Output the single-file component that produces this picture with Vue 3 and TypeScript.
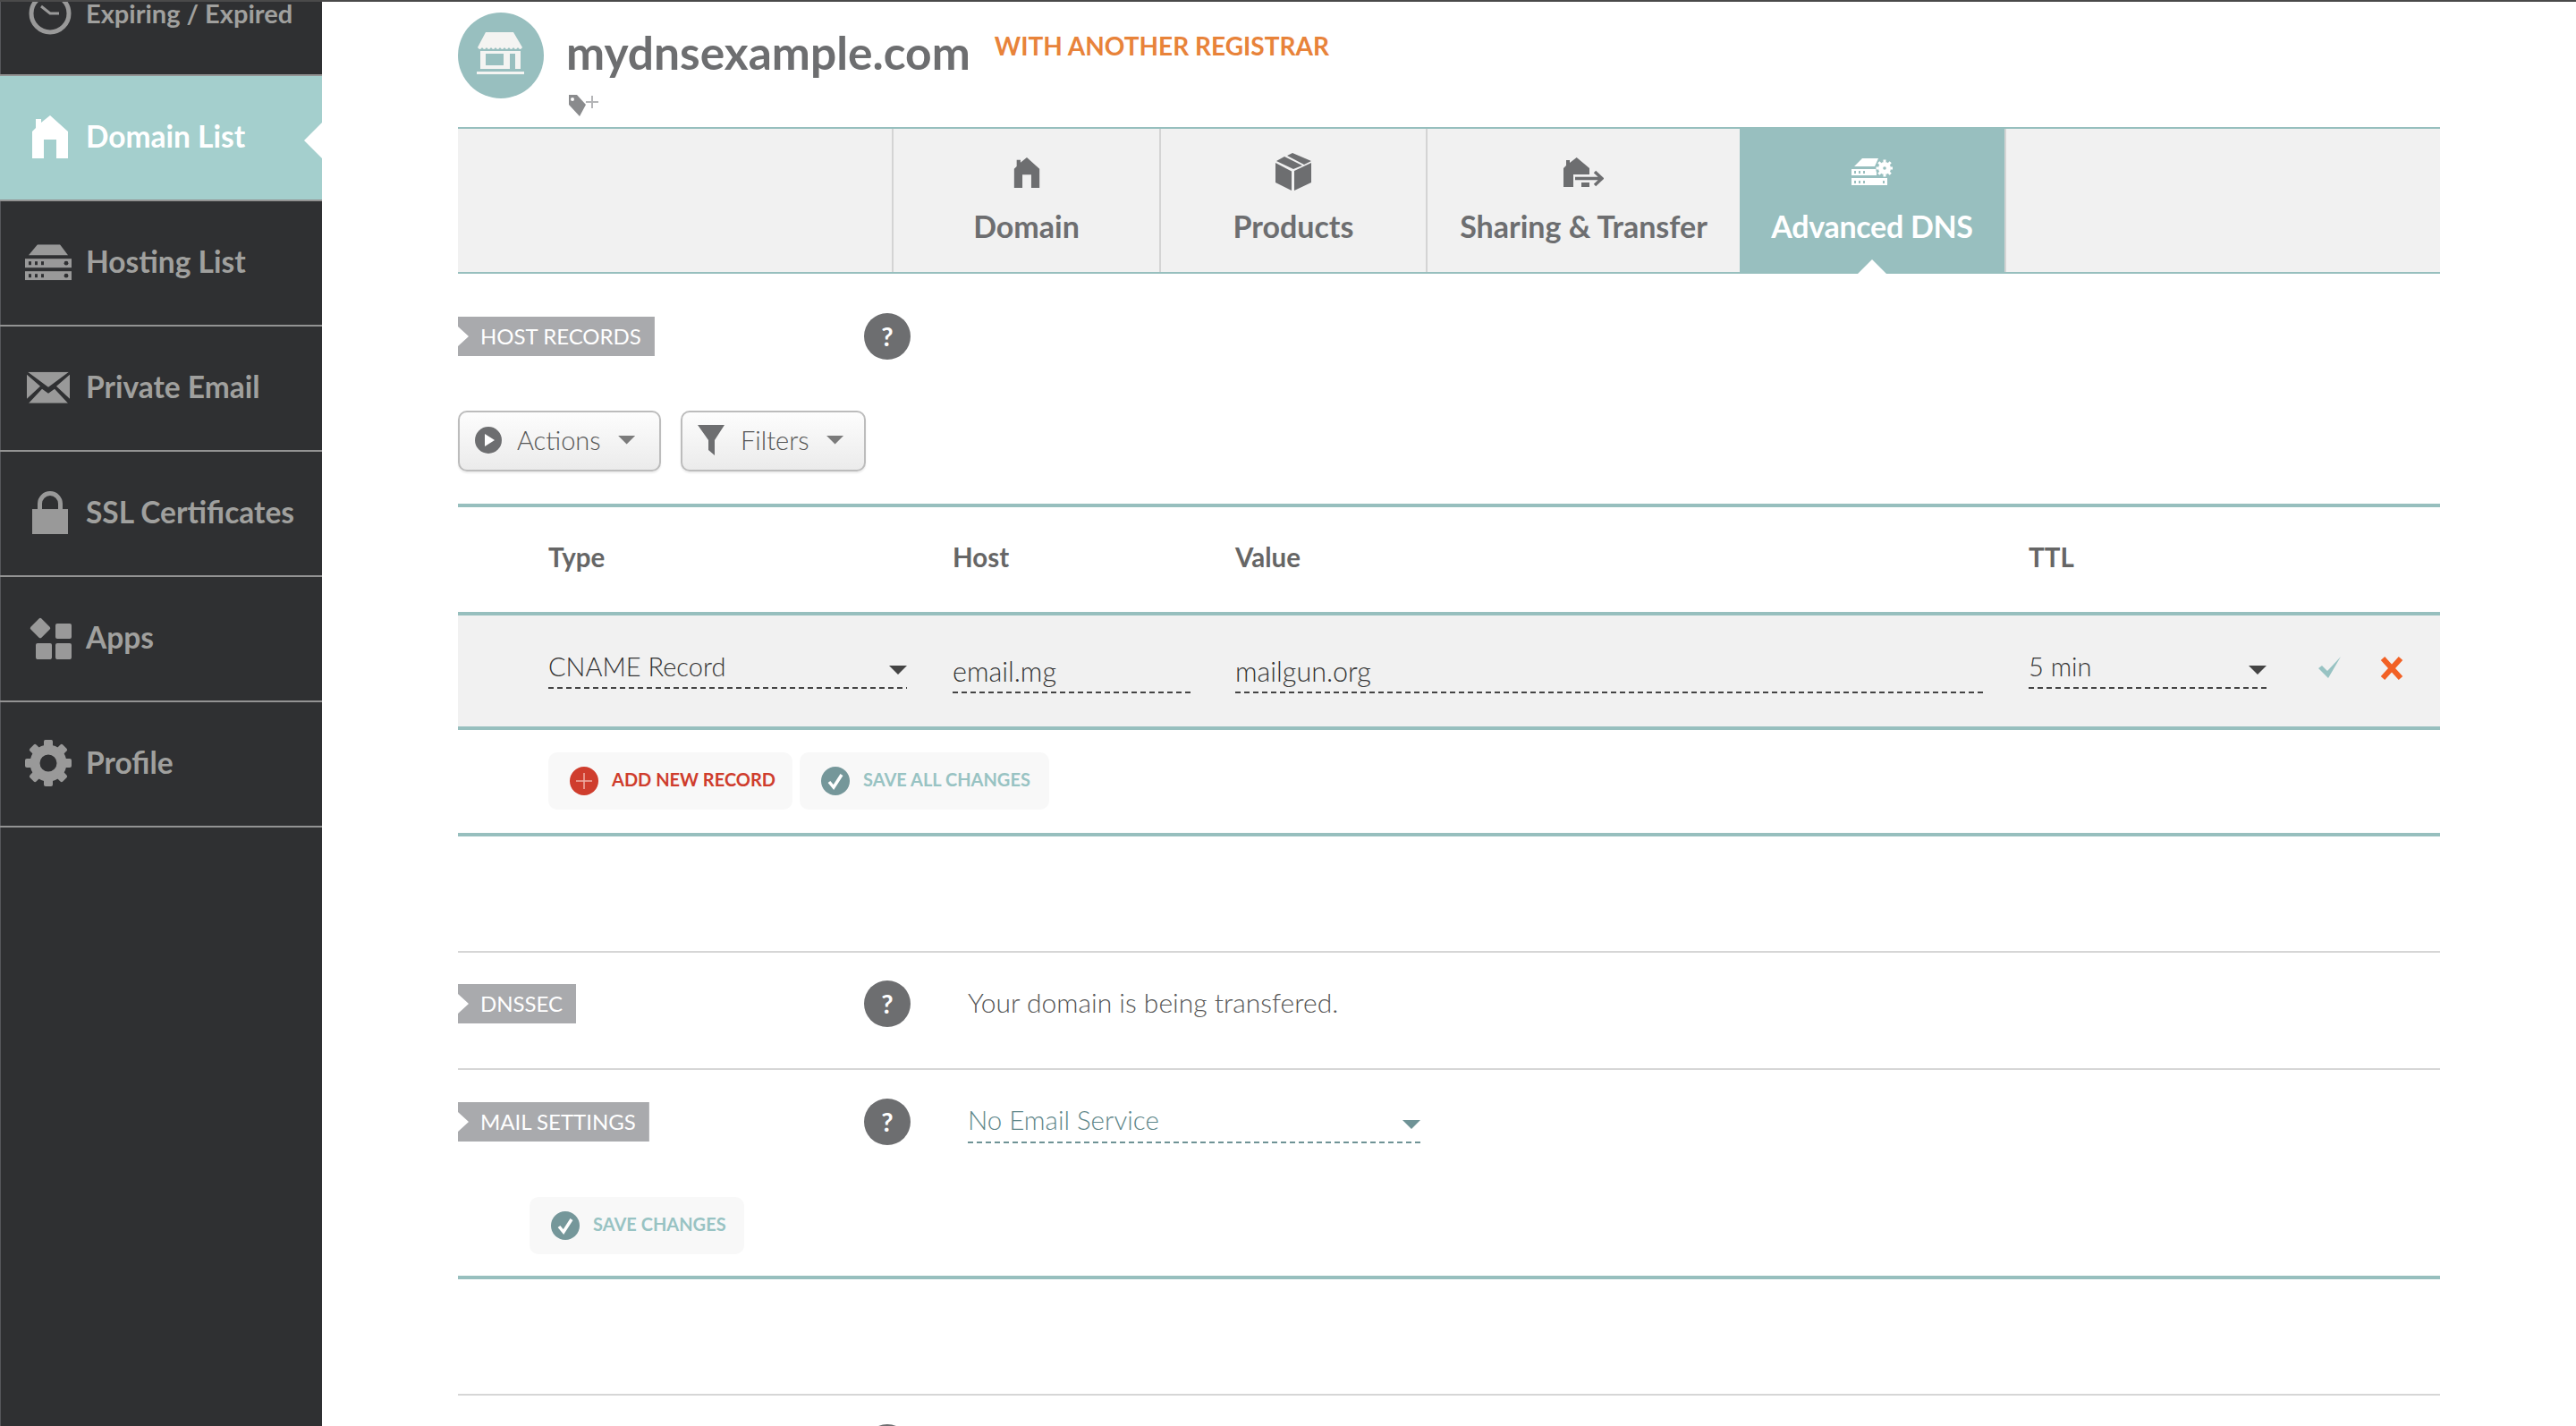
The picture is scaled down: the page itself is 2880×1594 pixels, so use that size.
<script setup lang="ts">
const teeth: number[] = [0, 45, 90, 135, 180, 225, 270, 315]
</script>

<template>
  <div class="page">
    <aside class="side">
      <div class="nav first">
        <svg class="ic" width="56" height="56" viewBox="0 0 56 56"><circle cx="28" cy="28" r="21" fill="none" stroke="#999" stroke-width="5"/><path d="M18 20 L28 28 H38" fill="none" stroke="#999" stroke-width="3"/></svg>
        <span>Expiring / Expired</span>
      </div>
      <div class="nav active">
        <svg class="ic" width="40" height="48" viewBox="0 0 40 48"><path fill="#fff" d="M20 0 L40 18 V48 H27 V27 H13 V48 H0 V18 L4 14 V4 H10 V8 Z"/></svg>
        <span>Domain List</span>
        <i class="notch"></i>
      </div>
      <div class="nav">
        <svg class="ic shift" width="52" height="40" viewBox="0 0 52 40"><path fill="#999" d="M4 12 L14 0 H39 L48 12 Z"/><rect y="16" width="52" height="10" fill="#999"/><rect y="30" width="52" height="10" fill="#999"/><g fill="#2f3032"><rect x="4" y="19" width="3" height="4"/><rect x="11" y="19" width="3" height="4"/><rect x="18" y="19" width="3" height="4"/><circle cx="46" cy="21" r="2.4"/><rect x="4" y="33" width="3" height="4"/><rect x="11" y="33" width="3" height="4"/><rect x="18" y="33" width="3" height="4"/><circle cx="46" cy="35" r="2.4"/></g></svg>
        <span>Hosting List</span>
      </div>
      <div class="nav">
        <svg class="ic env" width="48" height="35" viewBox="0 0 48 35"><path fill="#999" d="M1 0 H47 L24 17 Z M0 3 L15 16 L0 30 Z M48 3 L33 16 L48 30 Z M2 35 L17 19 L24 24 L31 19 L46 35 Z"/></svg>
        <span>Private Email</span>
      </div>
      <div class="nav">
        <svg class="ic" width="40" height="48" viewBox="0 0 40 48"><path fill="none" stroke="#999" stroke-width="5" d="M8.500 22 V14 A11.500 11.500 0 0 1 31.500 14 V22"/><rect y="20" width="40" height="28" fill="#999"/></svg>
        <span>SSL Certificates</span>
      </div>
      <div class="nav">
        <svg class="ic apps" width="48" height="48" viewBox="0 0 48 48"><g fill="#999"><rect x="4.500" y="4.500" width="17" height="17" rx="2" transform="rotate(45 13 13)"/><rect x="30" y="8" width="18" height="17" rx="2"/><rect x="8" y="30" width="18" height="18" rx="2"/><rect x="30" y="30" width="18" height="18" rx="2"/></g></svg>
        <span>Apps</span>
      </div>
      <div class="nav">
        <svg class="ic shift" width="52" height="52" viewBox="0 0 52 52"><circle cx="26" cy="26" r="15" fill="none" stroke="#999" stroke-width="11"/><rect v-for="a in teeth" :key="a" x="21" y="0" width="10" height="9" rx="2" fill="#999" :transform="`rotate(${a} 26 26)`"/></svg>
        <span>Profile</span>
      </div>
    </aside>

    <main class="main">
      <header class="head">
        <div class="logo">
          <svg width="96" height="96" viewBox="0 0 96 96"><g fill="#f4f4f2"><path d="M31 22 H62 L72 39 Q69.500 43 67 39 Q64.500 43 62 39 Q59.500 43 57 39 Q54.500 43 52 39 Q49.500 43 47 39 Q44.500 43 42 39 Q39.500 43 37 39 Q34.500 43 32 39 Q29.500 43 27 39 Q24.500 43 22 39 Z"/><path fill-rule="evenodd" d="M25 43 H70 V63 H25 Z M31 46 V59 H51 V46 Z M58 46 V63 H64 V46 Z"/><rect x="21" y="66" width="53" height="3"/></g></svg>
        </div>
        <div class="head-text">
          <div class="title-row">
            <h1>mydnsexample.com</h1>
            <span class="registrar">WITH ANOTHER REGISTRAR</span>
          </div>
          <svg class="tag" width="34" height="24" viewBox="0 0 34 24"><path fill="#8a8b8d" fill-rule="evenodd" d="M0 0 H9 L19 11 L12 24 L0 11 Z M4 3 A2 2 0 1 0 4 7 A2 2 0 1 0 4 3 Z"/><path fill="#b4b5b7" d="M25 1 H27 V7 H33 V9 H27 V15 H25 V9 H19 V7 H25 Z"/></svg>
        </div>
      </header>

      <nav class="tabs">
        <div class="tab-blank"></div>
        <div class="tab w-domain">
          <div class="tab-ic"><svg width="30" height="34" viewBox="0 0 40 48"><path fill="#6d6e70" d="M20 0 L40 18 V48 H27 V27 H13 V48 H0 V18 L4 14 V4 H10 V8 Z"/></svg></div>
          <span>Domain</span>
        </div>
        <div class="tab w-products">
          <div class="tab-ic"><svg width="40" height="43" viewBox="0 0 40 43"><path fill="#6d6e70" d="M0 11 L18 20.500 V42 L0 33 Z M21 20 L40 11 V33 L21 42 Z M1 9 L10 4 L30 14 L20 18 Z M13 3 L19 0 L40 9 L32 13 Z"/></svg></div>
          <span>Products</span>
        </div>
        <div class="tab w-sharing">
          <div class="tab-ic"><svg width="45" height="34" viewBox="0 0 45 34"><path fill="#6d6e70" d="M14.700 0 L29 12 V19 H11 V33 H0 V12 L3 9 V3 H7 V6 Z M20 28 H29 V33 H20 Z"/><path fill="none" stroke="#6d6e70" stroke-width="3.500" d="M13 23.500 H42 M35 16 L43 23.500 L35 31"/></svg></div>
          <span>Sharing &amp; Transfer</span>
        </div>
        <div class="tab active w-dns">
          <div class="tab-ic"><svg width="46" height="31" viewBox="0 0 46 31"><path fill="#fff" d="M3 9 L12 0 H30 L26 9 Z M0 12 H28 V19 H0 Z M0 22 H40 V30 H0 Z"/><circle cx="37" cy="11" r="10" fill="#98bfbf"/><circle cx="37" cy="11" r="7" fill="#fff"/><rect v-for="a in teeth" :key="a" x="35.500" y="1.500" width="3" height="3" fill="#fff" :transform="`rotate(${a} 37 11)`"/><circle cx="37" cy="11" r="1.800" fill="#98bfbf"/><g fill="#98bfbf"><rect x="3" y="14" width="2" height="3"/><rect x="8" y="14" width="2" height="3"/><rect x="13" y="14" width="2" height="3"/><rect x="3" y="25" width="2" height="3"/><rect x="8" y="25" width="2" height="3"/><rect x="13" y="25" width="2" height="3"/><rect x="35" y="25" width="2" height="3"/></g></svg></div>
          <span>Advanced DNS</span>
          <i class="tab-arrow"></i>
        </div>
        <div class="tab-rest"></div>
      </nav>

      <section class="line-row hosts">
        <div class="label">HOST RECORDS</div>
        <div class="help">?</div>
      </section>

      <div class="tools">
        <button class="tool actions">
          <svg width="30" height="30" viewBox="0 0 30 30"><circle cx="15" cy="15" r="15" fill="#6d6e70"/><path fill="#fff" d="M11 8 L22 15 L11 22 Z"/></svg>
          <span>Actions</span>
          <i class="caret"></i>
        </button>
        <button class="tool filters">
          <svg width="30" height="34" viewBox="0 0 30 34"><path fill="#6d6e70" d="M0 0 H30 L19 17 V34 L12 28 V17 Z"/></svg>
          <span>Filters</span>
          <i class="caret"></i>
        </button>
      </div>

      <div class="table">
        <div class="grid thead">
          <div>Type</div>
          <div>Host</div>
          <div>Value</div>
          <div>TTL</div>
        </div>
        <div class="grid record">
          <div class="cell type"><div class="field select">CNAME Record<i class="caret dark"></i></div></div>
          <div class="cell host"><div class="field input">email.mg</div></div>
          <div class="cell value"><div class="field input">mailgun.org</div></div>
          <div class="cell"><div class="field select">5 min<i class="caret dark"></i></div></div>
          <div class="row-actions">
            <svg width="26" height="24" viewBox="0 0 26 24"><path fill="#98c3c3" d="M0 13 L4 10 L10 16 L25 0 L11 24 Z"/></svg>
            <svg width="26" height="26" viewBox="0 0 26 26"><path fill="none" stroke="#f26125" stroke-width="6" d="M3 2 L23 24 M23 2 L3 24"/></svg>
          </div>
        </div>
        <div class="save-row">
          <button class="pill w-add">
            <svg width="32" height="32" viewBox="0 0 32 32"><circle cx="16" cy="16" r="16" fill="#cf3d2d"/><path stroke="#f0b0a6" stroke-width="1.500" d="M16 7 V25 M7 16 H25"/></svg>
            <span class="add">ADD NEW RECORD</span>
          </button>
          <button class="pill w-all">
            <svg width="32" height="32" viewBox="0 0 32 32"><circle cx="16" cy="16" r="16" fill="#75979a"/><path fill="none" stroke="#fff" stroke-width="3.500" d="M9 17 L14 23 L23 9"/></svg>
            <span class="save">SAVE ALL CHANGES</span>
          </button>
        </div>
      </div>

      <section class="line-row dnssec">
        <div class="label">DNSSEC</div>
        <div class="help">?</div>
        <div class="text">Your domain is being transfered.</div>
      </section>

      <section class="line-row mail">
        <div class="label">MAIL SETTINGS</div>
        <div class="help">?</div>
        <div class="field mail-select">No Email Service<i class="caret teal"></i></div>
      </section>

      <div class="mail-save">
        <button class="pill small">
          <svg width="32" height="32" viewBox="0 0 32 32"><circle cx="16" cy="16" r="16" fill="#75979a"/><path fill="none" stroke="#fff" stroke-width="3.500" d="M9 17 L14 23 L23 9"/></svg>
          <span class="save">SAVE CHANGES</span>
        </button>
      </div>

      <section class="line-row last">
        <div></div>
        <div class="help"></div>
      </section>
    </main>
  </div>
</template>

<style>
html, body { margin: 0; background: #fff; }
</style>

<style scoped>
.page {
  display: flex;
  width: 2880px;
  height: 1594px;
  box-sizing: border-box;
  border-top: 2px solid #4a4a4a;
  overflow: hidden;
  font-family: Lato, "Liberation Sans", sans-serif;
  background: #fff;
}
.side {
  width: 360px;
  flex: none;
  background: #2f3032;
  box-sizing: border-box;
  box-shadow: inset 1px 0 0 #55565a;
}
.nav {
  position: relative;
  height: 140px;
  box-sizing: border-box;
  border-bottom: 2px solid #939393;
  display: flex;
  align-items: center;
  padding: 0 0 2px 28px;
  color: #a0a09e;
  font-size: 33.5px;
  font-weight: 700;
  white-space: nowrap;
}
.nav span { margin-left: 68px; margin-bottom: 2px; }
.nav .ic { position: absolute; left: 36px; top: 50%; transform: translateY(-52%); }
.nav .ic.shift { left: 28px; }
.nav .ic.env { left: 30px; }
.nav .ic.apps { left: 32px; }
.first { height: 83px; padding: 0 0 55px 28px; font-size: 29px; }
.first .ic { left: 28px; top: -15px; transform: none; }
.active { background: #a4cfcd; color: #fff; }
.notch {
  position: absolute;
  right: 0;
  top: 52px;
  width: 20px;
  height: 40px;
  background: #fff;
  clip-path: polygon(0 50%, 100% 0, 100% 100%);
}
.main {
  flex: 1;
  min-width: 0;
  padding: 0 152px;
}
.head {
  height: 140px;
  display: flex;
  align-items: flex-start;
  box-sizing: border-box;
  padding-top: 12px;
}
.logo {
  width: 96px;
  height: 96px;
  border-radius: 50%;
  background: #98bfbf;
  flex: none;
}
.logo svg { display: block; }
.head-text { margin-left: 25px; }
.title-row {
  display: flex;
  align-items: flex-start;
  height: 92px;
}
h1 {
  margin: 14px 0 0;
  font-size: 51.500px;
  line-height: 60px;
  font-weight: 700;
  color: #6d6e70;
  white-space: nowrap;
}
.registrar {
  margin: 19px 0 0 27px;
  font-size: 28px;
  line-height: 36px;
  font-weight: 700;
  color: #e8833a;
  white-space: nowrap;
}
.tag { display: block; margin-left: 3px; }
.tabs {
  height: 164px;
  box-sizing: border-box;
  display: flex;
  border-top: 2px solid #97bfbe;
  border-bottom: 2px solid #97bfbe;
  background: #f1f1f1;
}
.tab-blank { width: 485px; }
.tab {
  position: relative;
  box-sizing: border-box;
  border-left: 2px solid #d4d4d4;
  display: flex;
  flex-direction: column;
  align-items: center;
  color: #6d6e70;
  font-size: 34px;
  font-weight: 700;
  white-space: nowrap;
}
.tab-ic {
  height: 43px;
  margin-top: 27px;
  display: flex;
  align-items: center;
}
.tab-ic svg { display: block; }
.tab span { margin-top: 17px; line-height: 44px; }
.w-domain { width: 299px; }
.w-products { width: 298px; }
.w-sharing { width: 351px; }
.w-dns { width: 296px; }
.tab.active {
  background: #98bfbf;
  border-left: 0;
  color: #fff;
  letter-spacing: -0.3px;
}
.tab-rest { flex: 1; border-left: 2px solid #d4d4d4; }
.tab-arrow {
  position: absolute;
  left: 132px;
  bottom: -2px;
  width: 32px;
  height: 16px;
  background: #fff;
  clip-path: polygon(50% 0, 100% 100%, 0 100%);
}
.line-row {
  display: grid;
  grid-template-columns: 454px 52px 1fr;
  align-items: center;
  height: 52px;
}
.hosts { margin-top: 44px; }
.label {
  justify-self: start;
  height: 44px;
  line-height: 44px;
  padding: 0 15px 0 25px;
  background: #a9aaad;
  color: #fff;
  font-size: 24px;
  white-space: nowrap;
  clip-path: polygon(0 0, 100% 0, 100% 100%, 0 100%, 0 33px, 12px 22px, 0 11px);
}
.help {
  width: 52px;
  height: 52px;
  border-radius: 50%;
  background: #6d6e70;
  color: #fff;
  text-align: center;
  line-height: 52px;
  font-size: 29px;
  font-weight: 700;
}
.tools {
  display: flex;
  gap: 22px;
  margin-top: 57px;
}
.tool {
  height: 68px;
  box-sizing: border-box;
  padding: 0 0 3px 17px;
  display: flex;
  align-items: center;
  border: 2px solid #bcbcbc;
  border-radius: 10px;
  background: linear-gradient(#fdfdfd, #ebebeb);
  box-shadow: 0 2px 2px rgba(0, 0, 0, 0.08);
  color: #555;
  font: 300 29px Lato, "Liberation Sans", sans-serif;
}
.tool span { margin-left: 17px; }
.actions { width: 227px; }
.filters { width: 207px; }
.filters span { margin-left: 18px; }
.caret {
  display: block;
  width: 20px;
  height: 10px;
  margin-left: 19px;
  background: #7b7b7b;
  clip-path: polygon(0 0, 100% 0, 50% 100%);
}
.table {
  margin-top: 36px;
  border-top: 4px solid #97bfbe;
  border-bottom: 4px solid #97bfbe;
}
.grid {
  display: grid;
  grid-template-columns: 452px 316px 887px 266px 1fr;
  padding-left: 101px;
  color: #666;
}
.thead {
  height: 117px;
  align-items: center;
  font-size: 29.5px;
  font-weight: 700;
  padding-bottom: 6px;
  box-sizing: border-box;
}
.record {
  height: 132px;
  box-sizing: border-box;
  background: #f1f1f1;
  border-top: 4px solid #97bfbe;
  border-bottom: 4px solid #97bfbe;
  align-items: start;
  padding-top: 40px;
}
.cell.type { padding-right: 51px; }
.cell.host { padding-right: 49px; }
.cell.value { padding-right: 51px; }
.field {
  position: relative;
  height: 42px;
  line-height: 34px;
  font-size: 29px;
  font-weight: 300;
  color: #333;
  box-sizing: border-box;
  background: repeating-linear-gradient(90deg, #444 0 6px, transparent 6px 10px) left bottom / 100% 2px no-repeat;
}
.input { margin-top: 5px; font-size: 30.500px; }
.field .caret {
  position: absolute;
  right: 0;
  top: 16px;
  margin: 0;
}
.caret.dark { background: #444; }
.row-actions {
  display: flex;
  gap: 43px;
  margin: 6px 0 0 58px;
}
.row-actions svg { display: block; }
.save-row {
  display: flex;
  gap: 8px;
  margin: 25px 0 26px 101px;
}
.pill {
  height: 64px;
  box-sizing: border-box;
  display: flex;
  align-items: center;
  gap: 15px;
  padding: 0 0 0 24px;
  border: 0;
  border-radius: 10px;
  background: #f8f8f8;
  font: 700 20px Lato, "Liberation Sans", sans-serif;
}
.pill span { margin-bottom: 5px; }
.w-add { width: 273px; }
.w-all { width: 279px; }
.add { color: #cf3d2d; }
.save { color: #98c3c3; }
.dnssec {
  margin-top: 128px;
  border-top: 2px solid #d6d6d6;
  padding-top: 31px;
  box-sizing: content-box;
}
.text {
  margin: 0 0 4px 64px;
  font-size: 30px;
  font-weight: 300;
  color: #555;
}
.mail {
  margin-top: 46px;
  border-top: 2px solid #d6d6d6;
  padding-top: 32px;
  box-sizing: content-box;
}
.mail-select {
  margin: 6px 0 0 64px;
  width: 506px;
  color: #5f878a;
  background-image: repeating-linear-gradient(90deg, #6f9396 0 6px, transparent 6px 10px);
  font-size: 29.500px;
  line-height: 32px;
}
.caret.teal { background: #6f9396; }
.mail-save {
  display: flex;
  margin-top: 58px;
  padding: 0 0 24px 80px;
  border-bottom: 4px solid #97bfbe;
}
.pill.small {
  width: 240px;
}
.last {
  margin-top: 128px;
  border-top: 2px solid #d6d6d6;
  padding-top: 32px;
  box-sizing: content-box;
}
</style>
